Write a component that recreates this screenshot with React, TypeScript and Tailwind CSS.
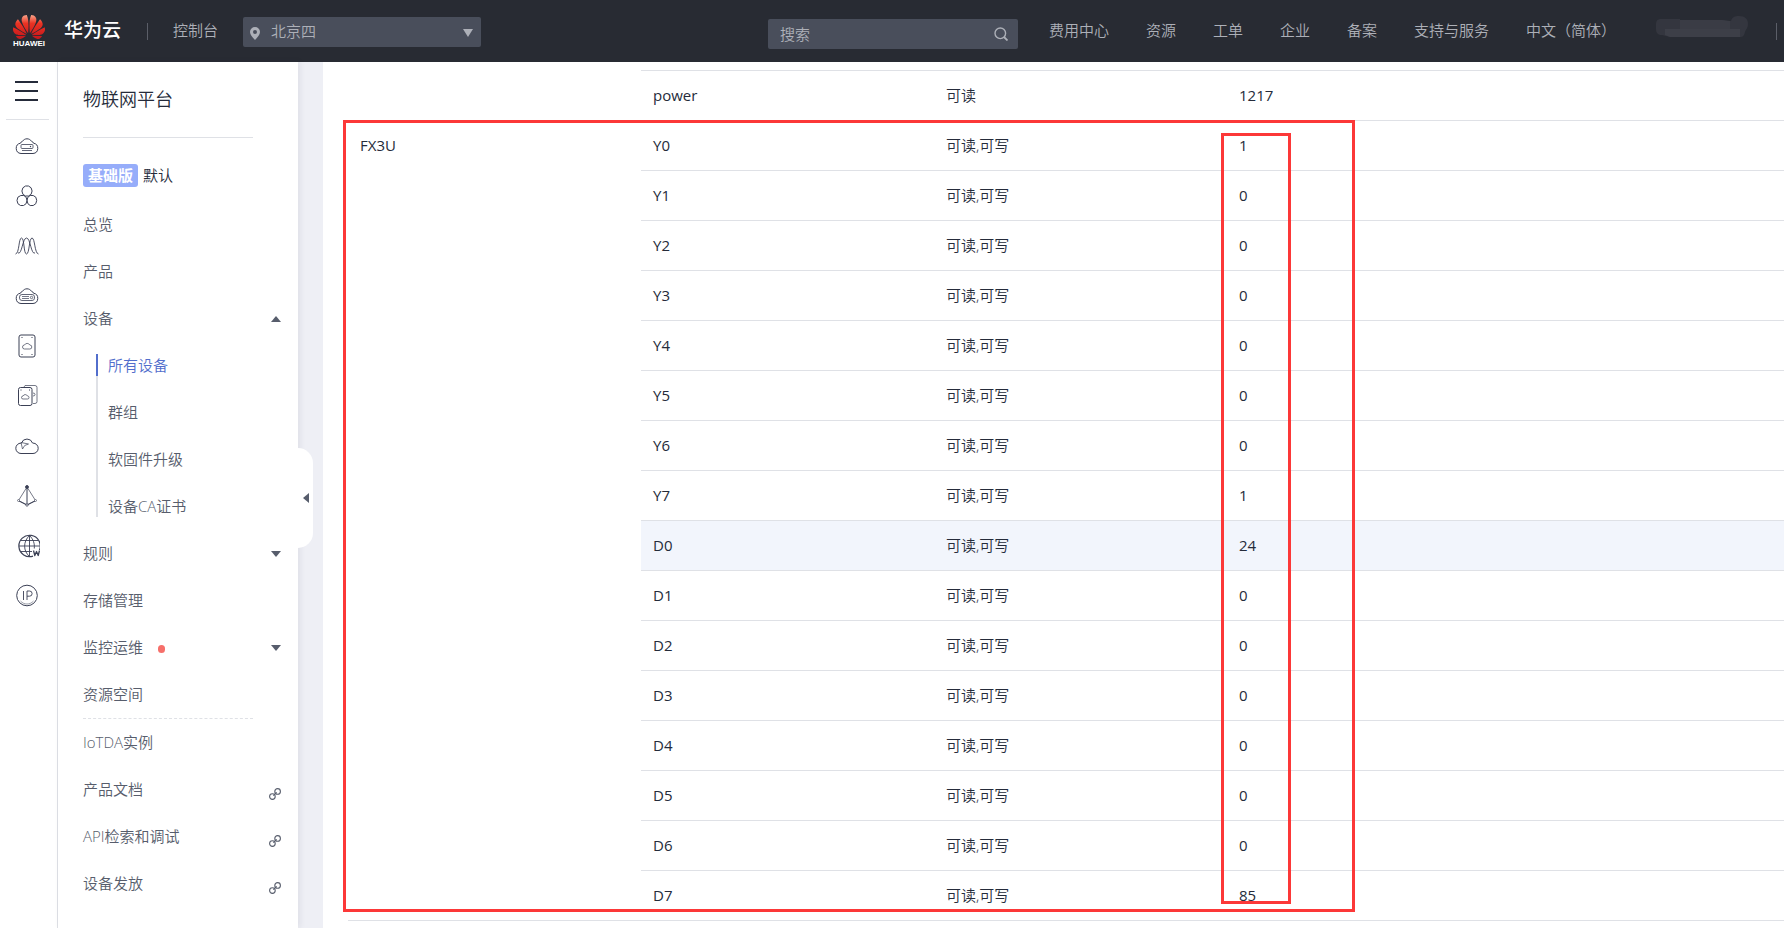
import React, { useState } from 'react';
import { SiHuawei } from 'react-icons/si';

interface Property {
  name: string;
  access: string;
  value: string;
}

interface MenuItem {
  label: string;
  arrow?: 'up' | 'down';
  dot?: boolean;
  external?: boolean;
}

const navLinks = ['费用中心', '资源', '工单', '企业', '备案', '支持与服务', '中文（简体）'];

const topMenu: MenuItem[] = [{ label: '总览' }, { label: '产品' }, { label: '设备', arrow: 'up' }];

const deviceMenu = ['所有设备', '群组', '软固件升级', '设备CA证书'];

const midMenu: MenuItem[] = [
  { label: '规则', arrow: 'down' },
  { label: '存储管理' },
  { label: '监控运维', arrow: 'down', dot: true },
  { label: '资源空间' },
];

const bottomMenu: MenuItem[] = [
  { label: 'IoTDA实例' },
  { label: '产品文档', external: true },
  { label: 'API检索和调试', external: true },
  { label: '设备发放', external: true },
];

const properties: Property[] = [
  { name: 'Y0', access: '可读,可写', value: '1' },
  { name: 'Y1', access: '可读,可写', value: '0' },
  { name: 'Y2', access: '可读,可写', value: '0' },
  { name: 'Y3', access: '可读,可写', value: '0' },
  { name: 'Y4', access: '可读,可写', value: '0' },
  { name: 'Y5', access: '可读,可写', value: '0' },
  { name: 'Y6', access: '可读,可写', value: '0' },
  { name: 'Y7', access: '可读,可写', value: '1' },
  { name: 'D0', access: '可读,可写', value: '24' },
  { name: 'D1', access: '可读,可写', value: '0' },
  { name: 'D2', access: '可读,可写', value: '0' },
  { name: 'D3', access: '可读,可写', value: '0' },
  { name: 'D4', access: '可读,可写', value: '0' },
  { name: 'D5', access: '可读,可写', value: '0' },
  { name: 'D6', access: '可读,可写', value: '0' },
  { name: 'D7', access: '可读,可写', value: '85' },
];

const cloudPath = 'M7 20.500a5.200 5.200 0 0 1-.5-10.300q.6-1.700 2-1.900a5.300 5.300 0 0 1 9 0q1.400.2 2 1.900a5.200 5.200 0 0 1-.5 10.300z';

// service shortcuts in the left rail, all drawn in a 26x26 box
const railIcons: { label: string; icon: React.ReactNode }[] = [
  {
    label: '弹性云服务器',
    icon: (
      <>
        <path d={cloudPath} />
        <rect x="7" y="11.500" width="12" height="4" rx="1" strokeWidth="0.8" />
        <circle cx="16.500" cy="13.500" r="0.700" fill="currentColor" stroke="none" />
        <path d="M8 17.500h10" strokeWidth="0.8" />
      </>
    ),
  },
  {
    label: '云容器引擎',
    icon: (
      <>
        <path d="M11.500 3h3l2.600 1.800 1 3.200-1 3.300-2.600 1.700h-3l-2.600-1.700-1-3.300 1-3.200z" />
        <path d="M6.800 12.500h3l2.300 1.700.9 3.200-.9 3.300-2.600 1.800h-3l-2.600-1.800-.9-3.300.9-3.200z" />
        <path d="M16.200 12.500h3l2.600 1.700.9 3.200-.9 3.300-2.600 1.800h-3l-2.300-1.800-.9-3.300.9-3.200z" />
      </>
    ),
  },
  {
    label: '弹性伸缩',
    icon: (
      <>
        <path d="M1.500 21C5.500 20.500 4.500 5 7.500 5s2 16 5 16 2.500-16 5.500-16 2.500 15.500 6.500 16" strokeWidth="0.900" />
        <path d="M4 20c4 2 4.500-15 8.500-15s4.500 17 8.500 15" strokeWidth="0.900" />
      </>
    ),
  },
  {
    label: '裸金属服务器',
    icon: (
      <>
        <path d={cloudPath} />
        <rect x="5.500" y="11.500" width="15" height="6" rx="2.500" strokeWidth="0.800" />
        <path d="M8 13.500h7M8 15.500h7" strokeWidth="0.700" />
        <circle cx="17.500" cy="14.500" r="1.200" strokeWidth="0.700" />
      </>
    ),
  },
  {
    label: '云硬盘',
    icon: (
      <>
        <rect x="5" y="2" width="16" height="22" rx="2" />
        <path d="M7.500 4.500h1M17.500 4.500h1M7.500 21.500h1M17.500 21.500h1" />
        <path d="M10.500 16a2 2 0 0 1 0-4 3 3 0 0 1 5.300 0 2 2 0 0 1 0 4z" strokeWidth="0.700" />
      </>
    ),
  },
  {
    label: '云备份',
    icon: (
      <>
        <path d="M10 4l1-1.500h10q2 0 2 2v14q0 2-2 2h-2M19 10q2 0 2 1.500T19 13" strokeWidth="0.700" />
        <rect x="4.500" y="4.500" width="13.500" height="18" rx="2" />
        <path d="M6.500 7h1M15 7h1" />
        <path d="M9 16a1.500 1.500 0 0 1 0-3 2.500 2.500 0 0 1 4.500 0 1.500 1.500 0 0 1 0 3z" strokeWidth="0.700" />
      </>
    ),
  },
  {
    label: '对象存储',
    icon: (
      <>
        <path d="M7 20.500a5.200 5.200 0 0 1 0-10.400l.5-.1a5.800 5.800 0 0 1 11 0l.5.1a5.200 5.200 0 0 1 0 10.400z" />
        <path d="M7 9.500l7.500 1.500-3.800 1.500L8.500 16z" strokeWidth="0.700" />
      </>
    ),
  },
  {
    label: '虚拟私有云',
    icon: (
      <>
        <path d="M13 4L4.500 17.500 13 22l8.500-4.500z" strokeWidth="0.700" />
        <path d="M13 4v18M5 18l8 4 8-4" />
        <circle cx="13" cy="4" r="1.400" fill="currentColor" />
        <circle cx="4.500" cy="17.500" r="1" fill="white" strokeWidth="0.600" />
        <circle cx="21.500" cy="17.500" r="1" fill="white" strokeWidth="0.600" />
        <circle cx="13" cy="22" r="1.200" fill="white" strokeWidth="0.800" />
      </>
    ),
  },
  {
    label: '域名注册',
    icon: (
      <>
        <path d="M25.500 17A10.700 10.700 0 1 0 19 23.100" strokeWidth="1.200" />
        <path d="M15.500 2.500c-6.500 6-6.500 15.500 0 21M15.500 2.500c4 4 5.200 8 4.800 13M15.500 2.500v21M5 13h21M7 7.500h17M7 18.500h11" strokeWidth="0.900" />
        <path d="M19.500 17.500l1.300 5 1.700-4 1.700 4 1.300-5" strokeWidth="1.300" />
      </>
    ),
  },
  {
    label: '弹性公网IP',
    icon: (
      <>
        <circle cx="13" cy="12.500" r="10.300" />
        <path d="M9.500 8v9M13 17V8h2.500a2.600 2.600 0 0 1 0 5.200H13" strokeWidth="0.900" />
        <path d="M6.500 18c3.500 4 9.500 4 13 0" strokeWidth="0.500" />
      </>
    ),
  },
];

function Triangle({ dir }: { dir: 'up' | 'down' }) {
  return (
    <svg viewBox="0 0 10 6" className="w-[10px] h-[6px]" fill="currentColor">
      <path d={dir === 'up' ? 'M5 0l5 6H0z' : 'M0 0h10L5 6z'} />
    </svg>
  );
}

function LinkIcon() {
  return (
    <svg viewBox="0 0 12 12" className="w-3 h-3 mt-2" fill="none" stroke="currentColor" strokeWidth="1.100">
      <circle cx="8.600" cy="3.400" r="2.800" />
      <circle cx="3.400" cy="8.600" r="2.800" />
      <path d="M4.300 7.700l3.400-3.400" />
    </svg>
  );
}

function MenuRow({ item }: { item: MenuItem }) {
  return (
    <li>
      <a href="#" className="flex items-center h-[47px] pr-[17px]">
        <span className="pb-px">{item.label}</span>
        {item.dot && <span className="w-[7px] h-2 ml-[15px] mt-[2px] rounded-full bg-[#f66f6a]" />}
        <span className="ml-auto">
          {item.arrow && <Triangle dir={item.arrow} />}
          {item.external && <LinkIcon />}
        </span>
      </a>
    </li>
  );
}

function Header() {
  const [keyword, setKeyword] = useState('');

  return (
    <header className="flex items-center h-[62px] bg-[#282b33] text-[#adb0b8] font-[350] whitespace-nowrap overflow-hidden">
      <a href="#" className="flex items-center ml-[13px] text-white">
        <span className="flex flex-col items-center w-8">
          <svg width="0" height="0" className="absolute">
            <linearGradient id="petal" x1="0" y1="0" x2="0" y2="1">
              <stop offset="0" stopColor="#f9a58a" />
              <stop offset="0.350" stopColor="#ea3323" />
              <stop offset="1" stopColor="#c4161c" />
            </linearGradient>
          </svg>
          <SiHuawei fill="url(#petal)" size={32} className="-my-[3px]" />
          <span className="font-['Liberation_Sans'] text-[8px] leading-[8px] font-bold">HUAWEI</span>
        </span>
        <span className="ml-[19px] pb-[2px] text-[19px] leading-6 font-medium">华为云</span>
      </a>
      <span className="w-px h-[17px] ml-[26px] bg-[#5b5e68]" />
      <a href="#" className="ml-[25px] pb-[2px]">控制台</a>
      <div className="relative ml-[25px] mt-[2px]">
        <select
          aria-label="区域"
          className="block w-[238px] h-[30px] pl-7 pr-8 pb-[2px] rounded-[2px] bg-[#494e5b] appearance-none"
        >
          <option>北京四</option>
        </select>
        <svg viewBox="0 0 10 13" className="absolute left-[7px] top-[10px] w-[10px] h-[13px] pointer-events-none" fill="currentColor">
          <path fillRule="evenodd" d="M5 0a5 5 0 0 1 5 5c0 2.500-2.500 5.500-5 8C2.500 10.500 0 7.500 0 5a5 5 0 0 1 5-5zm0 3a2 2 0 1 0 0 4 2 2 0 0 0 0-4z" />
        </svg>
        <svg viewBox="0 0 10 8" className="absolute right-2 top-3 w-[10px] h-2 pointer-events-none" fill="currentColor">
          <path d="M0 0h10L5 8z" />
        </svg>
      </div>
      <div className="relative ml-auto mt-[6px]">
        <input
          type="text"
          aria-label="搜索"
          placeholder="搜索"
          value={keyword}
          onChange={e => setKeyword(e.target.value)}
          className="block w-[250px] h-[30px] pl-3 pr-9 rounded-[2px] bg-[#494e5b] placeholder:text-[#adb0b8] focus:outline-none"
        />
        <svg viewBox="0 0 14 14" className="absolute right-[10px] top-2 w-[14px] h-[14px] pointer-events-none" fill="none" stroke="currentColor" strokeWidth="1.400">
          <circle cx="6.300" cy="6.300" r="5.300" />
          <path d="M10 10l3.500 3.500" strokeWidth="1.800" />
        </svg>
      </div>
      <nav className="flex gap-[37px] ml-[31px] pb-[2px]">
        {navLinks.map(label => (
          <a key={label} href="#">{label}</a>
        ))}
      </nav>
      <svg viewBox="0 0 92 22" className="w-[92px] h-[22px] ml-10 mb-2">
        <path fill="#34363f" d="M5 3h19v1h42l5 1h4c1-4 4-5 8-5 6 0 9 3 9 8 0 4-2 5-3 8-1 4-2 5-5 5H14l-8-2c-4 0-6-2-6-6V9c0-4 1-6 5-6z" />
        <path fill="#3d3f48" d="M9 13h75v8H14l-5-2z" />
        <path fill="#3a3c45" d="M24 4h42l8 1v8H24z" />
      </svg>
      <span className="w-px h-[17px] ml-7 mr-[7px] bg-[#5b5e68]" />
    </header>
  );
}

function Rail() {
  return (
    <nav className="w-[58px] shrink-0 border-r border-[#dfe1e6] bg-white text-[#3b4055]">
      <button type="button" aria-label="服务列表" className="flex flex-col justify-between w-[23px] h-5 mt-[19px] ml-[15px]">
        <span className="w-full h-[2px] bg-[#252b3a]" />
        <span className="w-full h-[2px] bg-[#252b3a]" />
        <span className="w-full h-[2px] bg-[#252b3a]" />
      </button>
      <div className="h-px ml-[6px] mr-2 mt-[18px] bg-[#dfe1e6]" />
      <ul className="pt-px">
        {railIcons.map(item => (
          <li key={item.label}>
            <a href="#" aria-label={item.label} className="flex items-center h-[50px] pl-[14px]">
              <svg viewBox="0 0 26 26" className="w-[26px] h-[26px]" fill="none" stroke="currentColor" strokeWidth="1" strokeLinejoin="round">
                {item.icon}
              </svg>
            </a>
          </li>
        ))}
      </ul>
    </nav>
  );
}

function Sidebar() {
  return (
    <aside className="relative w-60 shrink-0 pl-[25px] bg-white text-[#575d6c] font-[350] shadow-[2px_0_6px_rgba(37,43,58,0.08)]">
      <h1 className="flex items-center h-[76px] mr-[45px] pb-[2px] border-b border-[#dfe1e6] text-lg font-[350] text-[#252b3a]">物联网平台</h1>
      <div className="flex items-center gap-[5px] mt-[26px] mb-[14px] h-[23px] text-[#252b3a]">
        <span className="px-[5px] rounded-[3px] bg-[#96adfa] text-white font-bold leading-[23px]">基础版</span>
        <span className="pb-px">默认</span>
      </div>
      <ul>
        {topMenu.map(item => <MenuRow key={item.label} item={item} />)}
      </ul>
      <ul className="flex flex-col gap-[25px] ml-[13px] mt-3 mb-[13px] border-l-2 border-[#dfe1e6]">
        {deviceMenu.map((label, i) => (
          <li key={label}>
            <a
              href="#"
              className={`block -ml-[2px] pl-[10px] h-[22px] leading-[22px] border-l-2 ${
                i === 0 ? 'border-[#526ecc] text-[#526ecc]' : 'border-transparent'
              }`}
            >
              {label}
            </a>
          </li>
        ))}
      </ul>
      <ul>
        {midMenu.map(item => <MenuRow key={item.label} item={item} />)}
      </ul>
      <ul>
        <li aria-hidden="true" className="mr-[45px] border-t border-dashed border-[#dfe1e6]" />
        {bottomMenu.map(item => <MenuRow key={item.label} item={item} />)}
      </ul>
      <button
        type="button"
        aria-label="收起菜单"
        className="absolute left-full top-[386px] flex items-center justify-center w-[15px] h-[100px] rounded-r-[15px] bg-white"
      >
        <svg viewBox="0 0 6 10" className="w-[6px] h-[10px]" fill="currentColor">
          <path d="M6 0v10L0 5z" />
        </svg>
      </button>
    </aside>
  );
}

function PropertyTable() {
  const cell = 'h-[50px] px-3 pb-px border-b border-[#dfe1e6]';

  return (
    <table className="w-full table-fixed border-separate border-spacing-0 text-left text-[#252b3a]">
      <colgroup>
        <col className="w-[293px]" />
        <col className="w-[293px]" />
        <col className="w-[293px]" />
        <col />
      </colgroup>
      <tbody>
        <tr>
          <td rowSpan={2} className="border-b border-[#dfe1e6]" />
          <td className="h-[9px] border-b border-[#dfe1e6]" />
          <td className="h-[9px] border-b border-[#dfe1e6]" />
          <td className="h-[9px] border-b border-[#dfe1e6]" />
        </tr>
        <tr>
          <td className={cell}>power</td>
          <td className={`${cell} font-[350]`}>可读</td>
          <td className={cell}>1217</td>
        </tr>
        {properties.map((p, i) => (
          <tr key={p.name}>
            {i === 0 && (
              <td rowSpan={properties.length} className="px-3 pt-[13px] align-top border-b border-[#dfe1e6]">
                FX3U
              </td>
            )}
            <td className={`${cell} ${p.name === 'D0' ? 'bg-[#f2f5fc]' : ''}`}>{p.name}</td>
            <td className={`${cell} font-[350] ${p.name === 'D0' ? 'bg-[#f2f5fc]' : ''}`}>{p.access}</td>
            <td className={`${cell} ${p.name === 'D0' ? 'bg-[#f2f5fc]' : ''}`}>{p.value}</td>
          </tr>
        ))}
      </tbody>
    </table>
  );
}

export default function App() {
  return (
    <div className="flex flex-col min-h-screen bg-[#eeeff5] font-['Open_Sans','Noto_Sans_CJK_SC',sans-serif] text-[15px] leading-[22px]">
      <Header />
      <div className="flex flex-1">
        <Rail />
        <Sidebar />
        <main className="relative flex-1 min-w-0 ml-[25px] pl-[25px] bg-white">
          <PropertyTable />
          {/* highlight frames around the device group and its values */}
          <div className="absolute left-5 top-[58px] w-[1012px] h-[792px] border-3 border-[#fc3838] pointer-events-none" />
          <div className="absolute left-[898px] top-[71px] w-[70px] h-[771px] border-3 border-[#fc3838] pointer-events-none" />
        </main>
      </div>
    </div>
  );
}
